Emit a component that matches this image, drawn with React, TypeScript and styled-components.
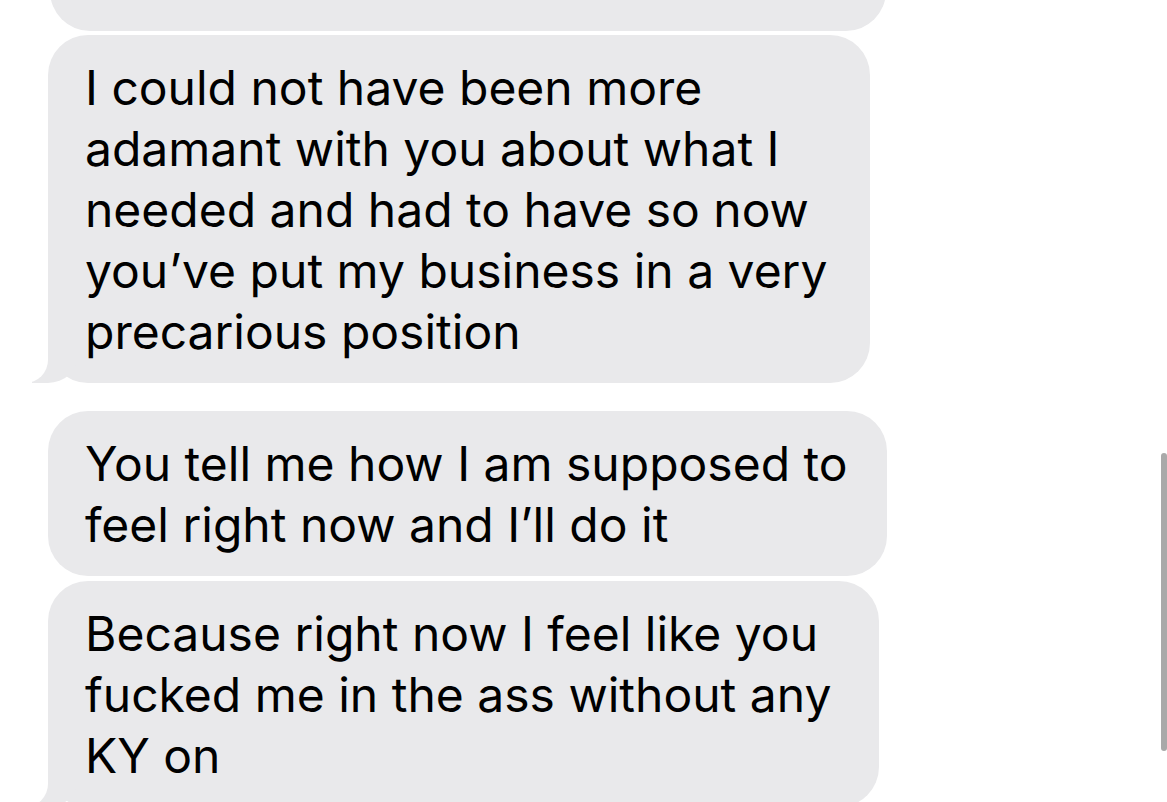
import React from 'react';
import styled, { createGlobalStyle } from 'styled-components';

const GlobalStyle = createGlobalStyle`
  html, body {
    margin: 0;
    padding: 0;
    background: #ffffff;
    overflow: hidden;
  }
  body {
    font-family: Inter, "Noto Sans", "Liberation Sans", sans-serif;
    -webkit-font-smoothing: antialiased;
  }
`;

const BUBBLE_GRAY = '#e9e9eb';

interface Message {
  lines: string[];
  width: number;
  gapAbove: number;
  tail?: boolean;
}

const messages: Message[] = [
  {
    lines: [
      'I could not have been more',
      'adamant with you about what I',
      'needed and had to have so now',
      'you\u2019ve put my business in a very',
      'precarious position',
    ],
    width: 822,
    gapAbove: 4,
    tail: true,
  },
  {
    lines: ['You tell me how I am supposed to', 'feel right now and I\u2019ll do it'],
    width: 839,
    gapAbove: 28,
  },
  {
    lines: ['Because right now I feel like you', 'fucked me in the ass without any', 'KY on'],
    width: 831,
    gapAbove: 5,
    tail: true,
  },
];

const Screen = styled.div`
  position: relative;
  width: 1167px;
  height: 802px;
  overflow: hidden;
`;

const Thread = styled.div`
  display: flex;
  flex-direction: column;
  align-items: flex-start;
  padding-left: 48px;
  margin-top: -60px;
`;

const Bubble = styled.div<{ $width: number; $gap: number; $tail?: boolean }>`
  position: relative;
  box-sizing: border-box;
  width: ${(p) => p.$width}px;
  margin-top: ${(p) => p.$gap}px;
  padding: 22px 30px 21px 37px;
  background: ${BUBBLE_GRAY};
  border-radius: 40px;
  color: #000;
  font-size: 48px;
  line-height: 61px;

  ${(p) =>
    p.$tail &&
    `
    &::before {
      content: '';
      position: absolute;
      left: -16px;
      bottom: 0;
      width: 46px;
      height: 40px;
      background: ${BUBBLE_GRAY};
      border-bottom-right-radius: 30px 28px;
    }
    &::after {
      content: '';
      position: absolute;
      left: -60px;
      bottom: 0;
      width: 60px;
      height: 40px;
      background: #ffffff;
      border-bottom-right-radius: 23px;
    }
  `}
`;

// earlier message, scrolled mostly out of view
const EarlierBubble = styled.div`
  width: 836px;
  height: 91px;
  margin-left: 2px;
  background: ${BUBBLE_GRAY};
  border-radius: 40px;
`;

const Line = styled.div`
  white-space: nowrap;
`;

const ScrollThumb = styled.div`
  position: absolute;
  top: 453px;
  right: 0;
  width: 6px;
  height: 298px;
  border-radius: 3px;
  background: #a9a9a9;
`;

export default function App() {
  return (
    <>
      <GlobalStyle />
      <Screen>
        <Thread>
          <EarlierBubble />
          {messages.map((m, i) => (
            <Bubble key={i} $width={m.width} $gap={m.gapAbove} $tail={m.tail}>
              {m.lines.map((line, j) => (
                <Line key={j}>{line}</Line>
              ))}
            </Bubble>
          ))}
        </Thread>
        <ScrollThumb />
      </Screen>
    </>
  );
}
